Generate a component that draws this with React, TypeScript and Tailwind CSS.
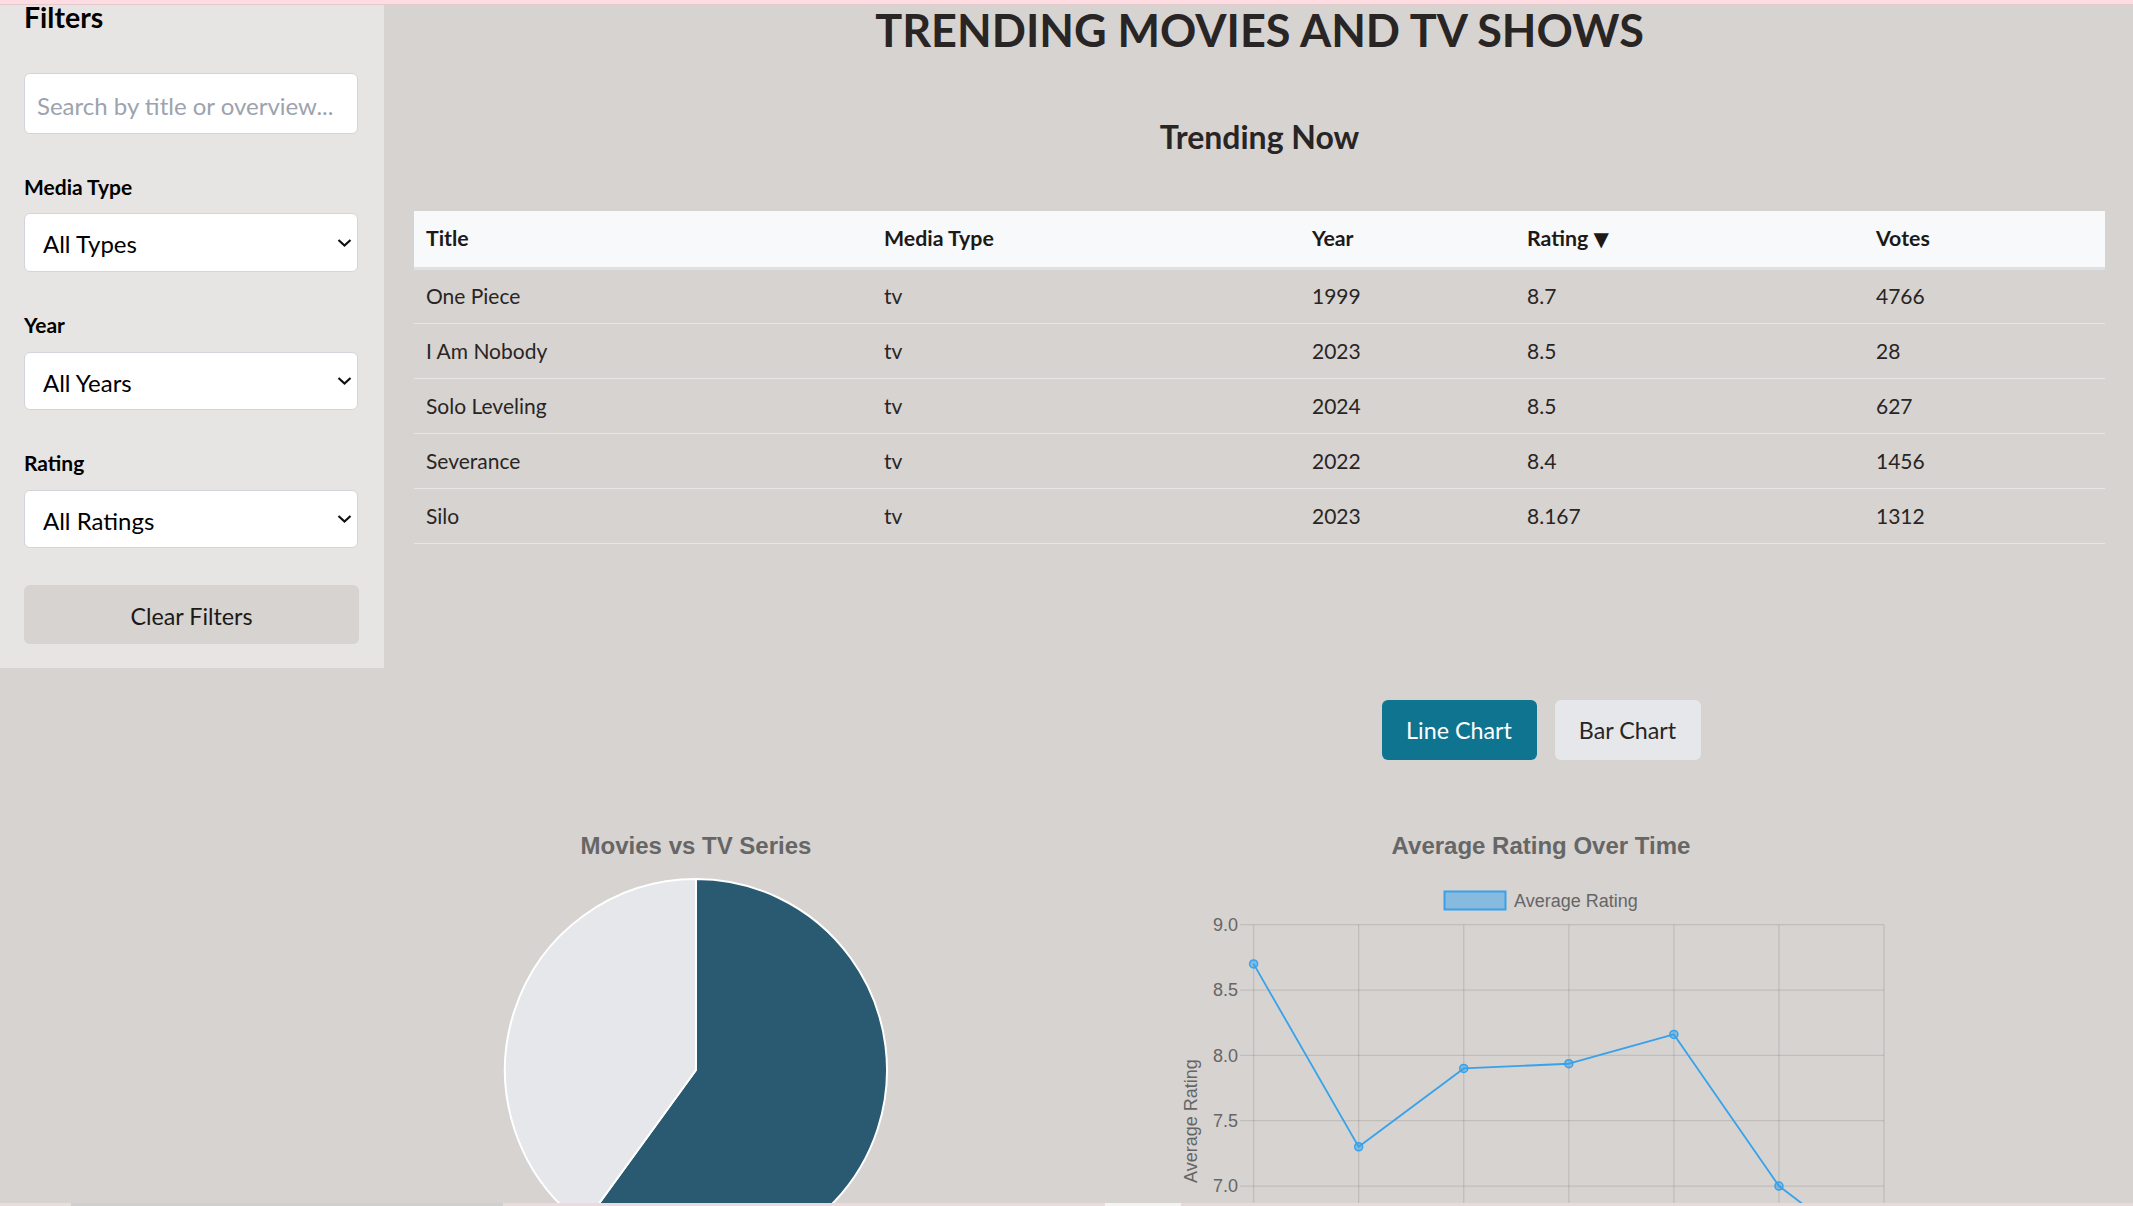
import React from "react";

const rows = [
  ["One Piece", "tv", "1999", "8.7", "4766"],
  ["I Am Nobody", "tv", "2023", "8.5", "28"],
  ["Solo Leveling", "tv", "2024", "8.5", "627"],
  ["Severance", "tv", "2022", "8.4", "1456"],
  ["Silo", "tv", "2023", "8.167", "1312"],
];

function Chevron() {
  return (
    <svg
      className="pointer-events-none absolute right-[6px] top-1/2 -translate-y-1/2"
      width="15"
      height="9"
      viewBox="0 0 15 9"
    >
      <polyline points="1.5,1.5 7.5,7 13.5,1.5" fill="none" stroke="#111" strokeWidth="2.2" />
    </svg>
  );
}

function FilterSelect({ value, h }: { value: string; h: string }) {
  return (
    <div className="relative mt-[14px] w-[334px]">
      <select
        defaultValue={value}
        className={`${h} w-full appearance-none rounded-[6px] border border-[#d1d5db] bg-white pl-[18px] pt-[3px] text-[24px] text-black outline-none`}
      >
        <option>{value}</option>
      </select>
      <Chevron />
    </div>
  );
}

function PieChart() {
  const cx = 282;
  const cy = 271;
  const r = 191;
  const a = (216 * Math.PI) / 180;
  const ex = cx + r * Math.sin(a);
  const ey = cy - r * Math.cos(a);
  return (
    <svg width="564" height="408" className="block">
      <text
        x={cx}
        y="55"
        textAnchor="middle"
        fontFamily="Liberation Sans, Arial, sans-serif"
        fontWeight="bold"
        fontSize="24"
        fill="#666"
      >
        Movies vs TV Series
      </text>
      <path
        d={`M${cx},${cy} L${cx},${cy - r} A${r},${r} 0 1 1 ${ex},${ey} Z`}
        fill="#295a71"
        stroke="#fff"
        strokeWidth="2"
        strokeLinejoin="round"
      />
      <path
        d={`M${cx},${cy} L${ex},${ey} A${r},${r} 0 0 1 ${cx},${cy - r} Z`}
        fill="#e5e7eb"
        stroke="#fff"
        strokeWidth="2"
        strokeLinejoin="round"
      />
    </svg>
  );
}

function LineChart() {
  const top = 125.7;
  const per = 130.67;
  const left = 75.6;
  const step = 105.07;
  const yOf = (v: number) => top + (9 - v) * per;
  const ticks = [9.0, 8.5, 8.0, 7.5, 7.0, 6.5, 6.0];
  const labels = [9.0, 8.5, 8.0, 7.5, 7.0];
  const data = [8.7, 7.3, 7.9, 7.936, 8.16, 7.0, 6.39];
  const bottom = yOf(6);
  const pts = data.map((v, i) => [left + i * step, yOf(v)]);
  const font = "Liberation Sans, Arial, sans-serif";
  return (
    <svg width="726" height="408" className="block">
      <text x="363" y="55" textAnchor="middle" fontFamily={font} fontWeight="bold" fontSize="24" fill="#666">
        Average Rating Over Time
      </text>
      <rect x="266.5" y="92.5" width="61" height="18" fill="rgba(54,162,235,0.5)" stroke="#36a2eb" strokeWidth="2" />
      <text x="336" y="108" fontFamily={font} fontSize="18" fill="#666">
        Average Rating
      </text>
      {ticks.map((t) => (
        <line key={t} x1="62" x2="706" y1={yOf(t)} y2={yOf(t)} stroke="rgba(0,0,0,0.1)" strokeWidth="1.3" />
      ))}
      {labels.map((t) => (
        <text key={t} x="60" y={yOf(t) + 6.3} textAnchor="end" fontFamily={font} fontSize="18" fill="#666">
          {t.toFixed(1)}
        </text>
      ))}
      {data.map((_, i) => (
        <line
          key={i}
          x1={left + i * step}
          x2={left + i * step}
          y1={top}
          y2={bottom + 10}
          stroke="rgba(0,0,0,0.1)"
          strokeWidth="1.3"
        />
      ))}
      <text
        transform="translate(19,322) rotate(-90)"
        textAnchor="middle"
        fontFamily={font}
        fontSize="18"
        fill="#666"
      >
        Average Rating
      </text>
      <polyline
        points={pts.map((p) => p.join(",")).join(" ")}
        fill="none"
        stroke="#36a2eb"
        strokeWidth="1.8"
        strokeLinejoin="round"
      />
      {pts.map((p, i) => (
        <circle key={i} cx={p[0]} cy={p[1]} r="4" fill="rgba(54,162,235,0.5)" stroke="#36a2eb" strokeWidth="1.5" />
      ))}
    </svg>
  );
}

export default function App() {
  return (
    <div
      className="relative flex h-[1206px] w-full items-start overflow-hidden bg-[#d6d3d1] text-[#292524]"
      style={{ fontFamily: "Lato, 'DejaVu Sans', sans-serif" }}
    >
      {/* top strip */}
      <div className="absolute inset-x-0 top-0 z-10 h-[5px] border-b border-[#e6c9cd] bg-[#fddde1]" />
      {/* bottom strip */}
      <div className="absolute inset-x-0 bottom-0 z-10 flex h-[3px]">
        <div className="w-[71px] bg-[#e9dede]" />
        <div className="w-[432px] bg-[#cfcfcf]" />
        <div className="w-[602px] bg-[#eadcdc]" />
        <div className="w-[76px] bg-[#f4f4f4]" />
        <div className="flex-1 bg-[#e6dada]" />
      </div>

      {/* Sidebar */}
      <aside className="flex w-[384px] shrink-0 flex-col bg-[#e7e5e4] pb-[24px] pl-[24px] text-black">
        <h2 className="text-[28.5px] font-bold leading-[34px]">Filters</h2>
        <input
          placeholder="Search by title or overview..."
          className="mt-[39px] h-[61px] w-[334px] rounded-[6px] border border-[#d1d5db] bg-white pl-[12px] pt-[3px] text-[24px] outline-none placeholder:text-[#9ca3af]"
        />
        <label className="mt-[40px] text-[21px] font-bold leading-[25px]">Media Type</label>
        <FilterSelect value="All Types" h="h-[59px]" />
        <label className="mt-[40px] text-[21px] font-bold leading-[25px]">Year</label>
        <div className="mt-px" />
        <FilterSelect value="All Years" h="h-[58px]" />
        <label className="mt-[40px] text-[21px] font-bold leading-[25px]">Rating</label>
        <div className="mt-px" />
        <FilterSelect value="All Ratings" h="h-[58px]" />
        <button className="mt-[37px] h-[59px] w-[335px] rounded-[6px] bg-[#d6d3d1] pt-[3px] text-[23.3px] text-[#1c1917]">
          Clear Filters
        </button>
      </aside>

      {/* Main */}
      <main className="flex min-w-0 flex-1 flex-col pl-[30px] pr-[28px] pt-[3px]">
        <h1 className="text-center text-[45px] font-bold leading-[54px] text-[#292524]">
          TRENDING MOVIES AND TV SHOWS
        </h1>
        <h2 className="mt-[61px] text-center text-[32px] font-bold leading-[38px] text-[#292524]">Trending Now</h2>

        <table className="mt-[55px] w-[1691px] table-fixed border-collapse text-left">
          <colgroup>
            <col className="w-[458px]" />
            <col className="w-[428px]" />
            <col className="w-[215px]" />
            <col className="w-[349px]" />
            <col className="w-[241px]" />
          </colgroup>
          <thead>
            <tr className="h-[57px] border-b-[3px] border-[#dfe0e3] bg-[#f8f9fb] text-[21.33px] font-bold text-[#1c1917]">
              <th className="pl-[12px]">Title</th>
              <th className="pl-[12px]">Media Type</th>
              <th className="pl-[12px]">Year</th>
              <th className="pl-[12px]">
                Rating <span className="font-['DejaVu_Sans'] text-[20px]">▼</span>
              </th>
              <th className="pl-[12px]">Votes</th>
            </tr>
          </thead>
          <tbody>
            {rows.map((r) => (
              <tr key={r[0]} className="h-[55px] border-b border-[#e7e6e8] text-[21px] text-[#292524]">
                {r.map((c, i) => (
                  <td key={i} className="pl-[12px]">
                    {c}
                  </td>
                ))}
              </tr>
            ))}
          </tbody>
        </table>

        <div className="grid grid-cols-[564px_726px] gap-x-[200px]">
          <div />
          <div className="mt-[156px] flex justify-center gap-[18px]">
            <button className="h-[60px] w-[155px] rounded-[6px] bg-[#0e7490] pt-[2px] text-[23.3px] text-white">
              Line Chart
            </button>
            <button className="h-[60px] w-[146px] rounded-[6px] bg-[#e5e7eb] pt-[2px] text-[23.3px] text-[#292524]">
              Bar Chart
            </button>
          </div>
          <div className="mt-[39px]">
            <PieChart />
          </div>
          <div className="mt-[39px]">
            <LineChart />
          </div>
        </div>
      </main>
    </div>
  );
}
